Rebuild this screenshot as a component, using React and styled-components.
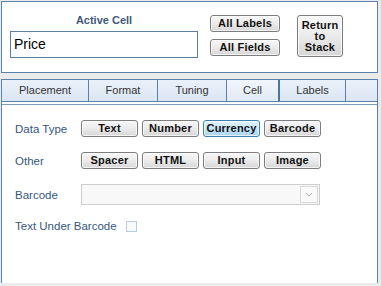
import styled, { createGlobalStyle } from "styled-components";

const Global = createGlobalStyle`
  body {
    margin: 0;
    background: #ebebeb;
    font-family: "Liberation Sans", Arial, sans-serif;
  }
`;

const Page = styled.div`
  width: 381px;
  height: 286px;
  padding: 1px 0 0 1px;
  box-sizing: border-box;
  overflow: hidden;
`;

const TopPanel = styled.div`
  width: 377px;
  height: 72px;
  box-sizing: border-box;
  background: #fff;
  border: 1px solid #5a81ab;
  display: flex;
  align-items: flex-start;
  padding: 12px 0 0 8px;
`;

const CellColumn = styled.div`
  display: flex;
  flex-direction: column;
  align-items: center;
  width: 188px;
`;

const Heading = styled.div`
  font-weight: bold;
  font-size: 11px;
  line-height: 13px;
  color: #41597a;
  margin-bottom: 4px;
`;

const CellInput = styled.div`
  width: 188px;
  height: 27px;
  box-sizing: border-box;
  border: 1px solid #5b7ea3;
  font-size: 14px;
  line-height: 25px;
  padding-left: 3px;
  color: #000;
`;

const ButtonStack = styled.div`
  display: flex;
  flex-direction: column;
  gap: 7px;
  margin: 1px 0 0 12px;
`;

const Button = styled.div`
  box-sizing: border-box;
  width: ${(p) => p.w || 57}px;
  height: ${(p) => p.h || 17}px;
  border: 1px solid ${(p) => (p.active ? "#3c7fb1" : "#7d7d7d")};
  border-radius: 3px;
  background: ${(p) =>
    p.active
      ? "linear-gradient(#e6f5fd, #c4e4f8 50%, #a9d5f2)"
      : "linear-gradient(#f7f7f7, #ebebeb 50%, #d6d6d6)"};
  box-shadow: inset 0 0 0 1px rgba(255, 255, 255, 0.7);
  display: flex;
  align-items: center;
  justify-content: center;
  text-align: center;
  font-weight: bold;
  font-size: 11px;
  line-height: 11px;
  letter-spacing: 0.2px;
  color: #111;
`;

const ReturnButton = styled(Button)`
  margin: 1px 0 0 17px;
`;

const TabPanel = styled.div`
  width: 377px;
  height: 204px;
  margin-top: 6px;
  box-sizing: border-box;
  background: #fff;
  border-left: 1px solid #5a81ab;
  border-right: 1px solid #5a81ab;
`;

const TabStrip = styled.div`
  display: flex;
  height: 23px;
  box-sizing: border-box;
  border-top: 1px solid #5a81ab;
  border-bottom: 1px solid #5a81ab;
  background: linear-gradient(#eaf1f9, #dbe6f3);
`;

const Tab = styled.div`
  width: ${(p) => p.w}px;
  flex-shrink: 0;
  box-sizing: border-box;
  text-align: center;
  border-right: ${(p) => (p.active ? "2px solid #4a76a6" : "1px solid #5a81ab")};
  background: ${(p) => (p.active ? "linear-gradient(#f1f6fb, #e1eaf5)" : "transparent")};
  font-size: 11px;
  line-height: 21px;
  color: #333;
  white-space: nowrap;
`;

const TabFiller = styled.div`
  flex: 1;
`;

const Divider = styled.div`
  height: 1px;
  margin-top: 2px;
  background: #5a81ab;
  opacity: 0.8;
`;

const Content = styled.div`
  padding: 15px 0 0 13px;
  display: flex;
  flex-direction: column;
`;

const Row = styled.div`
  display: flex;
  align-items: center;
  margin-bottom: ${(p) => p.mb ?? 15}px;
`;

const Label = styled.div`
  width: 66px;
  flex-shrink: 0;
  font-size: 11.5px;
  color: #36577c;
  white-space: nowrap;
`;

const ButtonRow = styled.div`
  display: flex;
  gap: 4px;
`;

const Select = styled.div`
  width: 239px;
  height: 21px;
  box-sizing: border-box;
  border: 1px solid #cdcdcd;
  background: #f8f8f8;
  display: flex;
  justify-content: flex-end;
`;

const SelectArrow = styled.div`
  width: 18px;
  margin: 1px;
  box-sizing: border-box;
  border: 1px solid #d8d8d8;
  background: #fafafa;
  display: flex;
  align-items: center;
  justify-content: center;
`;

const CheckLabel = styled(Label)`
  width: auto;
  margin-right: 9px;
`;

const Checkbox = styled.div`
  width: 11px;
  height: 11px;
  box-sizing: border-box;
  border: 1px solid #bccbda;
  background: #f7f9fb;
`;

export default function App() {
  return (
    <>
      <Global />
      <Page>
        <TopPanel>
          <CellColumn>
            <Heading>Active Cell</Heading>
            <CellInput>Price</CellInput>
          </CellColumn>
          <ButtonStack>
            <Button w={70}>All Labels</Button>
            <Button w={70}>All Fields</Button>
          </ButtonStack>
          <ReturnButton w={46} h={42}>
            Return
            <br />
            to
            <br />
            Stack
          </ReturnButton>
        </TopPanel>
        <TabPanel>
          <TabStrip>
            <Tab w={87}>Placement</Tab>
            <Tab w={69}>Format</Tab>
            <Tab w={69}>Tuning</Tab>
            <Tab w={53} active>Cell</Tab>
            <Tab w={66}>Labels</Tab>
            <TabFiller />
          </TabStrip>
          <Divider />
          <Content>
            <Row>
              <Label>Data Type</Label>
              <ButtonRow>
                <Button>Text</Button>
                <Button>Number</Button>
                <Button active>Currency</Button>
                <Button>Barcode</Button>
              </ButtonRow>
            </Row>
            <Row>
              <Label>Other</Label>
              <ButtonRow>
                <Button>Spacer</Button>
                <Button>HTML</Button>
                <Button>Input</Button>
                <Button>Image</Button>
              </ButtonRow>
            </Row>
            <Row mb={15}>
              <Label>Barcode</Label>
              <Select>
                <SelectArrow>
                  <svg width="8" height="5" viewBox="0 0 8 5">
                    <path d="M1 1 L4 4 L7 1" fill="none" stroke="#b0b0b0" strokeWidth="1" />
                  </svg>
                </SelectArrow>
              </Select>
            </Row>
            <Row>
              <CheckLabel>Text Under Barcode</CheckLabel>
              <Checkbox />
            </Row>
          </Content>
        </TabPanel>
      </Page>
    </>
  );
}
